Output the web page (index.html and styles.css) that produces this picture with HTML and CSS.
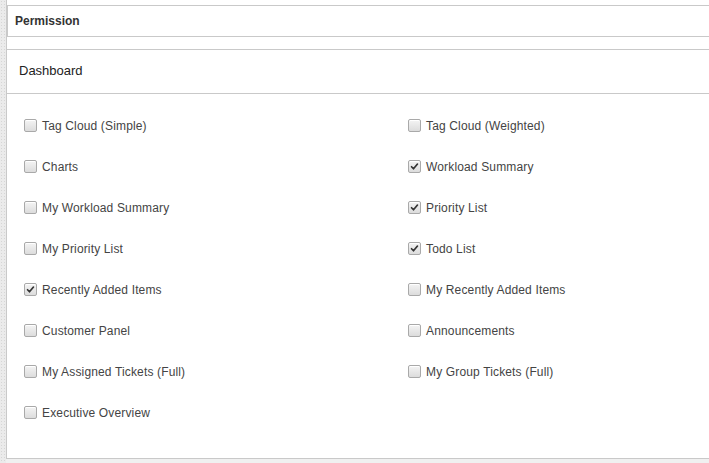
FILE: index.html
```html
<!DOCTYPE html>
<html lang="en">
<head>
    <meta charset="UTF-8">
    <title>Permission - Dashboard</title>
    <link rel="stylesheet" href="styles.css">
</head>
<body>
    <div class="page">
        <div class="perm-head">Permission</div>

        <section class="panel">
            <h2 class="panel-title">Dashboard</h2>

            <div class="options">
                <label class="option"><span class="box"></span>Tag Cloud (Simple)</label>
                <label class="option"><span class="box"></span>Tag Cloud (Weighted)</label>

                <label class="option"><span class="box"></span>Charts</label>
                <label class="option"><span class="box checked"><svg viewBox="0 0 13 13"><path d="M3 6.8 L5.3 9.2 L10 3.6" /></svg></span>Workload Summary</label>

                <label class="option"><span class="box"></span>My Workload Summary</label>
                <label class="option"><span class="box checked"><svg viewBox="0 0 13 13"><path d="M3 6.8 L5.3 9.2 L10 3.6" /></svg></span>Priority List</label>

                <label class="option"><span class="box"></span>My Priority List</label>
                <label class="option"><span class="box checked"><svg viewBox="0 0 13 13"><path d="M3 6.8 L5.3 9.2 L10 3.6" /></svg></span>Todo List</label>

                <label class="option"><span class="box checked"><svg viewBox="0 0 13 13"><path d="M3 6.8 L5.3 9.2 L10 3.6" /></svg></span>Recently Added Items</label>
                <label class="option"><span class="box"></span>My Recently Added Items</label>

                <label class="option"><span class="box"></span>Customer Panel</label>
                <label class="option"><span class="box"></span>Announcements</label>

                <label class="option"><span class="box"></span>My Assigned Tickets (Full)</label>
                <label class="option"><span class="box"></span>My Group Tickets (Full)</label>

                <label class="option"><span class="box"></span>Executive Overview</label>
            </div>
        </section>
    </div>
    <div class="below"></div>
</body>
</html>
```

FILE: styles.css
```css
* {
    box-sizing: border-box;
    margin: 0;
    padding: 0;
}

body {
    font-family: "Liberation Sans", Arial, sans-serif;
    background-color: #ebebeb;
    background-image: radial-gradient(#d6d6d6 0.6px, transparent 0.8px);
    background-size: 3px 3px;
    color: #333;
    height: 463px;
    overflow: hidden;
}

.page {
    margin-left: 6px;
    padding-top: 5px;
    border-left: 1px solid #c9c9c9;
    background: #fff;
    height: 458px;
}

.perm-head {
    height: 32px;
    border: 1px solid #c9c9c9;
    border-right: none;
    padding: 8px 0 0 7px;
    font-size: 12px;
    font-weight: bold;
    color: #333;
}

.panel {
    margin-top: 12px;
}

.panel-title {
    height: 45px;
    border-top: 1px solid #c9c9c9;
    border-bottom: 1px solid #c9c9c9;
    padding: 13px 0 0 12px;
    font-size: 13px;
    font-weight: normal;
    color: #222;
}

.options {
    display: grid;
    grid-template-columns: 384px 1fr;
    grid-auto-rows: 41px;
    padding: 11px 0 0 17px;
}

.option {
    display: flex;
    align-items: center;
    gap: 5px;
    font-size: 12px;
    letter-spacing: 0.15px;
    color: #444;
}

.box {
    width: 13px;
    height: 13px;
    border: 1px solid #a9a9a9;
    border-radius: 2px;
    background: linear-gradient(#f4f4f4, #dcdcdc);
    box-shadow: inset 0 1px 0 #fff;
    flex: none;
}

.box svg {
    display: block;
    width: 11px;
    height: 11px;
}

.box path {
    fill: none;
    stroke: #333;
    stroke-width: 2;
    stroke-linecap: round;
    stroke-linejoin: round;
}

.below {
    height: 5px;
    margin-left: 6px;
    border-top: 1px solid #c9c9c9;
    background: #f0f0f0;
}
```
